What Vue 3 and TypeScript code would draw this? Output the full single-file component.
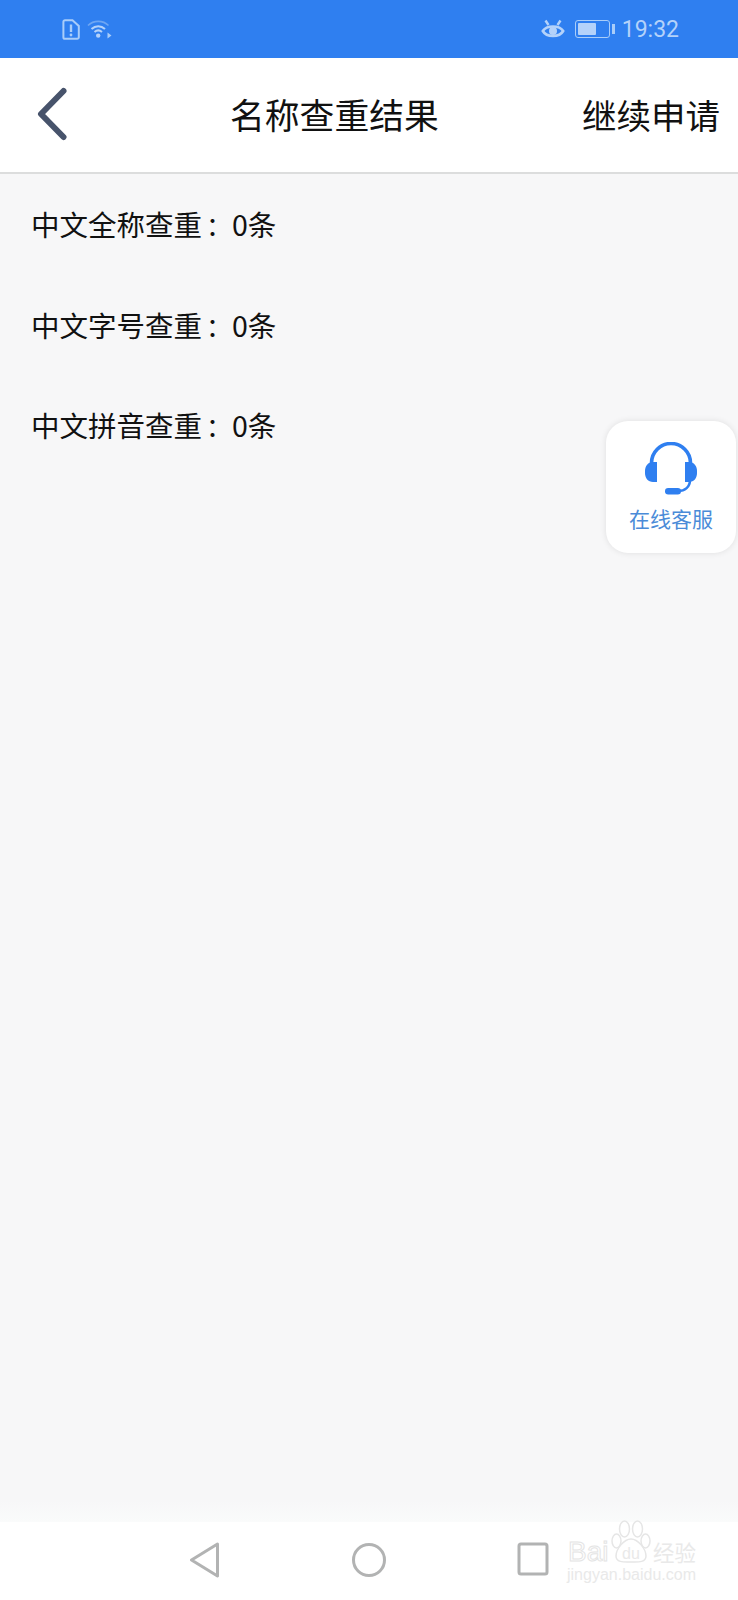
<script setup lang="ts">
const checks = [
  { label: '中文全称查重', count: 0 },
  { label: '中文字号查重', count: 0 },
  { label: '中文拼音查重', count: 0 }
]
</script>

<template>
  <div class="page">
    <div class="status-bar">
      <svg class="sim-icon" width="18" height="21" viewBox="0 0 18 21" fill="none">
        <path d="M3 1.2h7.5L16.8 7v11.2a1.6 1.6 0 0 1-1.6 1.6H3a1.6 1.6 0 0 1-1.6-1.6V2.8A1.6 1.6 0 0 1 3 1.2z" stroke="#a9cdf9" stroke-width="2" />
        <path d="M9 5.500v7.500" stroke="#a9cdf9" stroke-width="2.400" />
        <circle cx="9" cy="16" r="1.400" fill="#a9cdf9" />
      </svg>
      <svg class="wifi-icon" width="26" height="20" viewBox="0 0 26 20" fill="none">
        <path d="M1 6.500C6.500 1 16 1 21.500 6.500" stroke="#6ea6f3" stroke-width="1.600" />
        <path d="M4.500 10c4-3.800 9.500-3.800 13.500 0" stroke="#b4d2fa" stroke-width="2" />
        <path d="M7.500 13c2.500-2.200 5-2.200 7.500 0" stroke="#b4d2fa" stroke-width="2" />
        <circle cx="11.200" cy="16.600" r="2.200" fill="#b4d2fa" />
        <path d="M18 13.500v6M20.500 13.500l4 3-4 3z" fill="#a9cdf9" />
      </svg>
      <div class="status-right">
        <svg class="eye-icon" width="24" height="20" viewBox="0 0 24 20" fill="none">
          <path d="M1.800 12C5.500 6 18.500 6 22.200 12 18.500 18.500 5.500 18.500 1.800 12z" stroke="#b4d2fa" stroke-width="2.600" />
          <circle cx="12" cy="12" r="4" fill="#b4d2fa" />
          <path d="M4.500 1.500l3 4.500M19.500 1.500l-3 4.500" stroke="#b4d2fa" stroke-width="2.400" />
        </svg>
        <div class="battery">
          <div class="battery-level"></div>
        </div>
        <div class="battery-tip"></div>
        <span class="time">19:32</span>
      </div>
    </div>

    <header class="nav">
      <svg class="back-icon" width="32" height="54" viewBox="0 0 32 54" fill="none">
        <path d="M27.500 4 5 27l22.500 23" stroke="#47536b" stroke-width="6" stroke-linecap="round" stroke-linejoin="round" />
      </svg>
      <h1 class="title">名称查重结果</h1>
      <span class="action">继续申请</span>
    </header>

    <main class="content">
      <p v-for="item in checks" :key="item.label" class="row">{{ item.label }}<span class="colon">：</span>{{ item.count }}条</p>
    </main>

    <div class="nav-fade"></div>
    <nav class="system-nav">
      <div class="nav-cell">
        <svg width="32" height="36" viewBox="0 0 32 36" fill="none">
          <path d="M28.500 2 2.500 18l26 16z" stroke="#b2b3b3" stroke-width="3" stroke-linejoin="round" />
        </svg>
      </div>
      <div class="nav-cell">
        <svg width="36" height="36" viewBox="0 0 36 36" fill="none">
          <circle cx="18" cy="18" r="15.500" stroke="#b2b3b3" stroke-width="3" />
        </svg>
      </div>
      <div class="nav-cell">
        <svg width="32" height="34" viewBox="0 0 32 34" fill="none">
          <rect x="2" y="2" width="28" height="30" rx="2" stroke="#b2b3b3" stroke-width="3" />
        </svg>
      </div>
    </nav>

    <aside class="service-card">
      <svg width="52" height="54" viewBox="0 0 52 54" fill="none">
        <path d="M6.500 24V21a19 19 0 0 1 39 0v3" stroke="#2f7ff0" stroke-width="3.600" />
        <path d="M12 20V40H8C3 40 0 36 0 31V29C0 24 3 20 8 20z" fill="#2f7ff0" />
        <path d="M40 20V40H44C49 40 52 36 52 31V29C52 24 49 20 44 20z" fill="#2f7ff0" />
        <path d="M45 38c0 7-5 11-12 11" stroke="#2f7ff0" stroke-width="2.500" />
        <rect x="20" y="46" width="16" height="6.500" rx="3.200" fill="#2f7ff0" />
      </svg>
      <span class="service-label">在线客服</span>
    </aside>

    <div class="watermark">
      <svg class="paw" width="40" height="44" viewBox="0 0 40 44" fill="none">
        <ellipse cx="5.500" cy="21" rx="4.500" ry="7" stroke="#e6e6e6" stroke-width="1.500" />
        <ellipse cx="13.500" cy="9" rx="5" ry="8" stroke="#e6e6e6" stroke-width="1.500" />
        <ellipse cx="26.500" cy="9" rx="5" ry="8" stroke="#e6e6e6" stroke-width="1.500" />
        <ellipse cx="34.500" cy="21" rx="4.500" ry="7" stroke="#e6e6e6" stroke-width="1.500" />
        <path d="M20 19c7 0 15 10 15 17 0 7-9 6-15 6s-15 1-15-6c0-7 8-17 15-17z" stroke="#e6e6e6" stroke-width="1.500" />
      </svg>
      <span class="mark-bai">Bai</span>
      <span class="mark-du">du</span>
      <span class="mark-cn">经验</span>
      <span class="mark-url">jingyan.baidu.com</span>
    </div>
  </div>
</template>

<style scoped>
.page {
  position: relative;
  display: flex;
  flex-direction: column;
  width: 738px;
  height: 1600px;
  overflow: hidden;
  background: #f7f7f8;
  font-family: "Noto Sans CJK SC", "Noto Sans", sans-serif;
}

.status-bar {
  display: flex;
  align-items: center;
  flex-shrink: 0;
  height: 58px;
  padding: 0 59px 0 62px;
  box-sizing: border-box;
  background: #2f7ff0;
}

.wifi-icon {
  margin-left: 7px;
}

.status-right {
  display: flex;
  align-items: center;
  margin-left: auto;
}

.battery {
  width: 35px;
  height: 18px;
  padding: 2px;
  box-sizing: border-box;
  border: 1px solid #a9cdf9;
  border-radius: 3px;
  margin-left: 10px;
}

.battery-level {
  width: 18px;
  height: 100%;
  background: #b4d2fa;
  border-radius: 1px;
}

.battery-tip {
  width: 3px;
  height: 10px;
  margin-left: 2px;
  background: #a9cdf9;
}

.time {
  margin-left: 7px;
  font-family: Roboto, sans-serif;
  font-size: 23px;
  color: #b4d2fa;
}

.nav {
  display: flex;
  align-items: center;
  flex-shrink: 0;
  height: 116px;
  padding: 0 18px 2px 36px;
  box-sizing: border-box;
  background: #fff;
  border-bottom: 2px solid #dcdddd;
}

.title {
  margin: 0 0 0 162px;
  font-size: 34.800px;
  font-weight: 400;
  line-height: 1;
  color: #111;
}

.action {
  margin-left: auto;
  font-size: 34.500px;
  line-height: 1;
  color: #111;
}

.content {
  flex: 1;
  padding: 30px 0 0 31px;
}

.row {
  height: 40px;
  margin: 0 0 60.500px;
  font-size: 28.500px;
  line-height: 40px;
  color: #111;
}

.colon {
  margin-left: 4px;
  font-size: 26px;
  line-height: 1;
}

.nav-fade {
  flex-shrink: 0;
  height: 22px;
  background: linear-gradient(#f7f7f8, #fafbfb);
}

.system-nav {
  display: flex;
  flex-shrink: 0;
  height: 78px;
  padding: 20px 0 0 123px;
  box-sizing: border-box;
  background: #fff;
}

.nav-cell {
  display: flex;
  justify-content: center;
  width: 164px;
  height: 36px;
}

.service-card {
  position: absolute;
  top: 421px;
  left: 606px;
  display: flex;
  flex-direction: column;
  align-items: center;
  width: 130px;
  height: 132px;
  padding-top: 21px;
  box-sizing: border-box;
  background: #fff;
  border-radius: 22px;
  box-shadow: 0 0 6px rgba(0, 0, 0, 0.1);
}

.service-label {
  margin-top: 7px;
  font-size: 21px;
  line-height: 30px;
  color: #4a8bd8;
}

.watermark {
  position: absolute;
  top: 1520px;
  left: 567px;
  width: 132px;
  height: 62px;
  color: #e9e9e9;
}

.paw {
  position: absolute;
  top: 0;
  left: 44px;
}

.mark-bai,
.mark-du,
.mark-cn,
.mark-url {
  position: absolute;
  white-space: nowrap;
}

.mark-bai {
  top: 16px;
  left: 1px;
  font-family: "Liberation Sans", sans-serif;
  font-size: 28px;
  line-height: 32px;
  color: #fff;
  -webkit-text-stroke: 1px #e4e4e4;
}

.mark-du {
  top: 24px;
  left: 55px;
  font-family: "Liberation Sans", sans-serif;
  font-size: 16px;
  line-height: 20px;
}

.mark-cn {
  top: 16px;
  left: 86px;
  font-size: 21.500px;
  line-height: 32px;
}

.mark-url {
  top: 46px;
  left: 0;
  font-family: "Liberation Sans", sans-serif;
  font-size: 16px;
  line-height: 18px;
}
</style>

<style>
body {
  background: #f7f7f8;
}
</style>
